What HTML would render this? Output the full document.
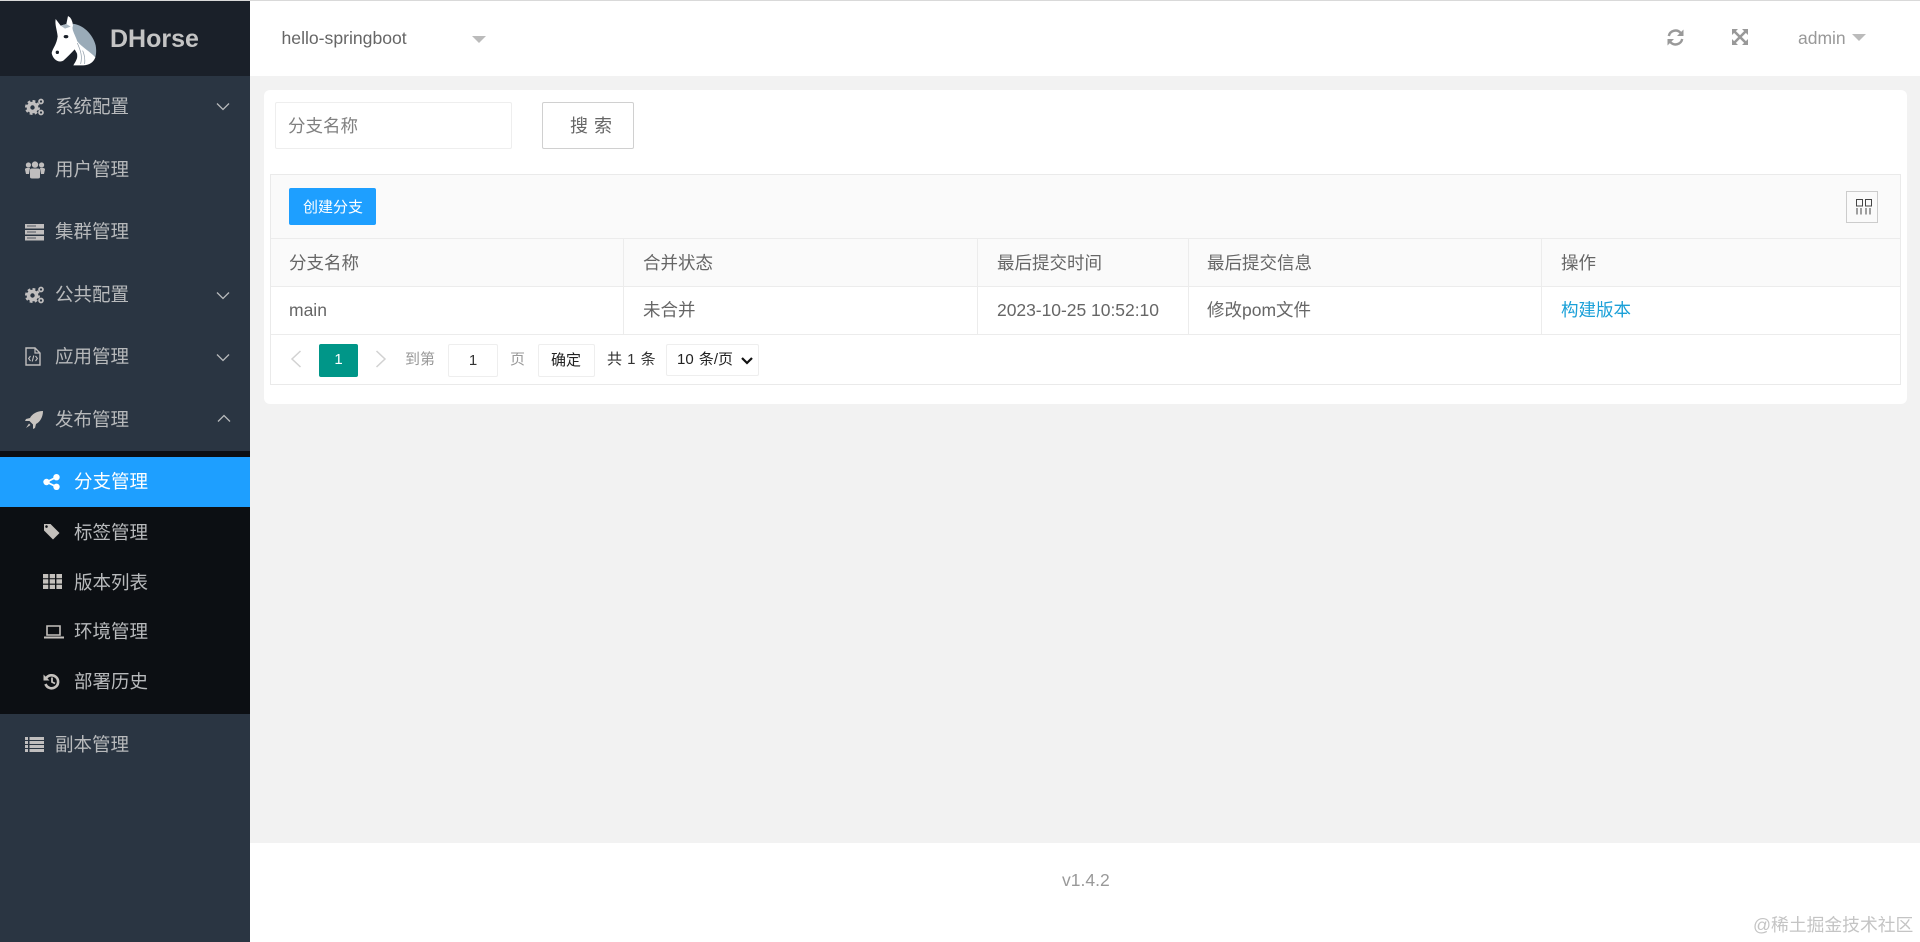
<!DOCTYPE html>
<html lang="zh"><head><meta charset="utf-8"><title>DHorse</title>
<style>
html,body{margin:0;padding:0;width:1920px;height:942px;overflow:hidden;background:#f2f2f2;font-family:"Liberation Sans","Noto Sans CJK SC",sans-serif;color:#666}
div,svg,a,span{position:absolute;box-sizing:border-box}
.t{white-space:nowrap;line-height:30px;height:30px}
.m{left:55px;font-size:18.5px;color:#b8babc}
.s{left:74px;font-size:18.5px;color:#b8babc}
.c{font-size:17.5px;color:#666}
.p{font-size:15px}
.b{background:#fff;border:1px solid #eee;border-radius:2px}
.ln{background:#ececec}
svg{overflow:visible}
</style></head><body>

<!-- sidebar -->
<div style="left:0;top:0;width:250px;height:942px;background:#2a3542"></div>
<div style="left:0;top:0;width:250px;height:76px;background:#1a2029"></div>
<div style="left:0;top:451px;width:250px;height:263px;background:#0c0f13"></div>
<div style="left:0;top:457px;width:250px;height:50px;background:#1e9fff"></div>

<svg style="left:40px;top:8px" width="70" height="62" viewBox="0 0 210 186">
<path d="M80 48C122 40 158 76 167 112C170 130 168 142 165 150L112 150L106 90Z" fill="#9aabb8"/>
<path d="M47 33L62 53L79 48L84 24Q97 30 99 54C93 62 106 82 112 100C126 118 152 132 166 148Q158 170 130 172L100 172C106 162 114 150 112 138L104 124C94 135 82 147 70 158C56 166 38 154 35 135C38 120 50 110 53 85C51 65 44 50 47 33Z" fill="#fff"/>
<path d="M62 53L79 48L92 56L75 62Z" fill="#aab7c1"/>
<ellipse cx="78" cy="86" rx="7" ry="5" fill="#1a2029"/>
<circle cx="52" cy="133" r="5" fill="#1a2029"/>
<path d="M112 105C120 125 128 140 122 168M128 128C134 142 136 152 134 168" fill="none" stroke="#8a98a4" stroke-width="2"/>
</svg>
<div class="t" style="left:110px;top:24px;font-size:25px;font-weight:bold;color:#c4c4c4">DHorse</div>

<!-- menu icons -->
<svg style="left:25px;top:97px" width="20" height="20" viewBox="0 0 20 20" fill="none" stroke="#c0bebe"><circle cx="7.5" cy="10.5" r="4" stroke-width="3.6"/><circle cx="7.5" cy="10.5" r="6.4" stroke-width="2.2" stroke-dasharray="2.8 2.2"/><circle cx="16" cy="4.5" r="2" stroke-width="1.7"/><circle cx="16" cy="15.5" r="2" stroke-width="1.7"/></svg>
<svg style="left:25px;top:160px" width="20" height="20" viewBox="0 0 20 20" fill="#c0bebe"><circle cx="3.4" cy="5" r="2.6"/><circle cx="16.6" cy="5" r="2.6"/><circle cx="10" cy="4.6" r="3.2"/><path d="M0 9.5Q0 8 2 8H5L4 14H1ZM20 9.5Q20 8 18 8H15L16 14H19Z"/><path d="M5 10Q5 8.5 7 8.5H13Q15 8.5 15 10V17Q15 18.5 13 18.5H7Q5 18.5 5 17Z"/></svg>
<svg style="left:25px;top:223px" width="19" height="18" viewBox="0 0 19 18" fill="#c0bebe"><path d="M0 1h19v4.5H0zM0 7h19v4.5H0zM0 13h19v4.5H0z"/><path d="M2 3h9M2 9h9M2 15h9" stroke="#2a3542" stroke-width=".8"/></svg>
<svg style="left:25px;top:285px" width="20" height="20" viewBox="0 0 20 20" fill="none" stroke="#c0bebe"><circle cx="7.5" cy="10.5" r="4" stroke-width="3.6"/><circle cx="7.5" cy="10.5" r="6.4" stroke-width="2.2" stroke-dasharray="2.8 2.2"/><circle cx="16" cy="4.5" r="2" stroke-width="1.7"/><circle cx="16" cy="15.5" r="2" stroke-width="1.7"/></svg>
<svg style="left:25px;top:347px" width="16" height="19" viewBox="0 0 16 19" fill="none" stroke="#c0bebe" stroke-width="1.4"><path d="M1 1H10L15 6V18H1Z"/><path d="M10 1V6H15" stroke-width="1.2"/><path d="M5.5 9L3.6 11.5L5.5 14M10.5 9L12.4 11.5L10.5 14M8.8 8.5L7.2 14.5" stroke-width="1.1"/></svg>
<svg style="left:25px;top:411px" width="18" height="18" viewBox="0 0 18 18" fill="#c8c4c0"><path d="M18 0C12 0 7 3 5 7L1 8L0 10L4.500 10L8 13.500L8 18L10 17L11 13C15 11 18 6 18 0Z"/><path d="M4 12.500L1 17L5.500 14Z"/></svg>

<svg style="left:43px;top:474px" width="17" height="16" viewBox="0 0 17 16" fill="#fff"><circle cx="3.500" cy="8" r="3.200"/><circle cx="13.500" cy="3.200" r="3.200"/><circle cx="13.500" cy="12.800" r="3.200"/><path d="M3.500 8L13.500 3.200M3.500 8L13.500 12.800" stroke="#fff" stroke-width="1.800"/></svg>
<svg style="left:43px;top:523px" width="17" height="17" viewBox="0 0 17 17" fill="#c4c0bc"><path d="M1 1H7.500L16.500 10L10 16.500L1 7.500ZM3.500 2.300A1.300 1.300 0 1 0 3.501 2.300Z"/></svg>
<svg style="left:43px;top:574px" width="19" height="15" viewBox="0 0 19 15" fill="#c4c0bc"><path d="M0 0h5.300v4.300H0zM6.700 0H12v4.300H6.700zM13.400 0H19v4.300h-5.600zM0 5.300h5.300v4.300H0zM6.700 5.300H12v4.300H6.700zM13.400 5.300H19v4.300h-5.600zM0 10.700h5.300V15H0zM6.700 10.700H12V15H6.700zM13.400 10.700H19V15h-5.600z"/></svg>
<svg style="left:44px;top:625px" width="20" height="14" viewBox="0 0 20 14"><path d="M3 1H16V10H3Z" fill="none" stroke="#c4c0bc" stroke-width="1.600"/><path d="M0 11.500H20V13.500H0Z" fill="#c4c0bc"/></svg>
<svg style="left:43px;top:673px" width="17" height="17" viewBox="0 0 17 17" fill="none" stroke="#c4c0bc"><path d="M3 5.500A6.500 6.500 0 1 1 2.500 11" stroke-width="2.600"/><path d="M0.500 1.500V7.500H6.500Z" fill="#c4c0bc" stroke="none"/><path d="M9 4.500V9L12 10.500" stroke-width="1.800"/></svg>
<svg style="left:25px;top:737px" width="19" height="15" viewBox="0 0 19 15" fill="#c0bebe"><path d="M0 0h3v3H0zM4.500 0H19v3H4.500zM0 4h3v3H0zM4.500 4H19v3H4.500zM0 8h3v3H0zM4.500 8H19v3H4.500zM0 12h3v3H0zM4.500 12H19v3H4.500z"/></svg>

<!-- menu text -->
<div class="t m" style="top:92px">系统配置</div>
<div class="t m" style="top:155px">用户管理</div>
<div class="t m" style="top:217px">集群管理</div>
<div class="t m" style="top:280px">公共配置</div>
<div class="t m" style="top:342px">应用管理</div>
<div class="t m" style="top:405px">发布管理</div>
<div class="t s" style="top:467px;color:#fff">分支管理</div>
<div class="t s" style="top:518px">标签管理</div>
<div class="t s" style="top:568px">版本列表</div>
<div class="t s" style="top:617px">环境管理</div>
<div class="t s" style="top:667px">部署历史</div>
<div class="t m" style="top:730px">副本管理</div>

<!-- chevrons -->
<svg style="left:216px;top:102px" width="14" height="9" fill="none" stroke="#b8babc" stroke-width="1.300"><path d="M1 1.500L7 7.500L13 1.500"/></svg>
<svg style="left:216px;top:291px" width="14" height="9" fill="none" stroke="#b8babc" stroke-width="1.300"><path d="M1 1.500L7 7.500L13 1.500"/></svg>
<svg style="left:216px;top:353px" width="14" height="9" fill="none" stroke="#b8babc" stroke-width="1.300"><path d="M1 1.500L7 7.500L13 1.500"/></svg>
<svg style="left:217px;top:414px" width="14" height="9" fill="none" stroke="#b8babc" stroke-width="1.300"><path d="M1 7.500L7 1.500L13 7.500"/></svg>

<!-- header -->
<div style="left:250px;top:0;width:1670px;height:76px;background:#fff"></div>
<div style="left:0;top:0;width:1920px;height:1px;background:#d9d9d9"></div>
<div class="t" style="left:281.500px;top:23px;font-size:17.600px;color:#666">hello-springboot</div>
<svg style="left:472px;top:36px" width="14" height="7"><path d="M0 0H14L7 7Z" fill="#bbb"/></svg>
<svg style="left:1667px;top:29px" width="17" height="17" viewBox="0 0 17 17" fill="none" stroke="#999" stroke-width="2.400"><path d="M1.800 7A6.800 6.800 0 0 1 13.500 3.800"/><path d="M15.200 10A6.800 6.800 0 0 1 3.500 13.200"/><path d="M16.500.5V7H10Z" fill="#999" stroke="none"/><path d="M.5 16.500V10H7Z" fill="#999" stroke="none"/></svg>
<svg style="left:1732px;top:29px" width="16" height="16" viewBox="0 0 16 16" fill="#999"><path d="M0 0H6L0 6ZM16 0V6L10 0ZM0 16V10L6 16ZM16 16H10L16 10Z"/><path d="M2 2L14 14M14 2L2 14" stroke="#999" stroke-width="2.600"/></svg>
<div class="t" style="left:1798px;top:23px;font-size:17.500px;color:#999">admin</div>
<svg style="left:1852px;top:34px" width="14" height="7"><path d="M0 0H14L7 7Z" fill="#bbb"/></svg>

<!-- card -->
<div style="left:264px;top:90px;width:1643px;height:314px;background:#fff;border-radius:6px"></div>
<div class="b" style="left:275px;top:102px;width:237px;height:47px"></div>
<div class="t" style="left:288px;top:111px;font-size:17.500px;color:#808080">分支名称</div>
<div style="left:542px;top:102px;width:92px;height:47px;background:#fff;border:1px solid #d0d0d0;border-radius:2px"></div>
<div class="t" style="left:570px;top:111px;font-size:18px;color:#666;word-spacing:1px">搜 索</div>

<!-- table -->
<div style="left:270px;top:174px;width:1631px;height:211px;background:#fff;border:1px solid #eaeaea"></div>
<div style="left:271px;top:175px;width:1629px;height:63px;background:#fafafa"></div>
<div style="left:271px;top:239px;width:1629px;height:47px;background:#fafafa"></div>
<div class="ln" style="left:271px;top:238px;width:1629px;height:1px"></div>
<div class="ln" style="left:271px;top:286px;width:1629px;height:1px"></div>
<div class="ln" style="left:271px;top:334px;width:1629px;height:1px"></div>
<div class="ln" style="left:623px;top:238px;width:1px;height:96px"></div>
<div class="ln" style="left:977px;top:238px;width:1px;height:96px"></div>
<div class="ln" style="left:1188px;top:238px;width:1px;height:96px"></div>
<div class="ln" style="left:1541px;top:238px;width:1px;height:96px"></div>

<div style="left:289px;top:188px;width:87px;height:37px;background:#1e9fff;border-radius:2px"></div>
<div class="t" style="left:303px;top:193px;font-size:15px;color:#fff">创建分支</div>

<div style="left:1846px;top:191px;width:32px;height:32px;border:1px solid #ccc"></div>
<svg style="left:1855px;top:198px" width="18" height="17" viewBox="0 0 18 17" fill="none" stroke="#444" stroke-width="1"><path d="M1.500 1.500H7.500V8H1.500ZM10.500 1.500H16.500V8H10.500ZM2 10V16.500M6 10V16.500M11 10V16.500M15 10V16.500"/></svg>

<div class="t c" style="left:289px;top:248px">分支名称</div>
<div class="t c" style="left:643px;top:248px">合并状态</div>
<div class="t c" style="left:997px;top:248px">最后提交时间</div>
<div class="t c" style="left:1207px;top:248px">最后提交信息</div>
<div class="t c" style="left:1561px;top:248px">操作</div>
<div class="t c" style="left:289px;top:295px">main</div>
<div class="t c" style="left:643px;top:295px">未合并</div>
<div class="t c" style="left:997px;top:295px;letter-spacing:-.03px">2023-10-25 10:52:10</div>
<div class="t c" style="left:1207px;top:295px">修改pom文件</div>
<div class="t c" style="left:1561px;top:295px;color:#1aa0d8">构建版本</div>

<!-- pagination -->
<svg style="left:290px;top:350px" width="12" height="18" fill="none" stroke="#d2d2d2" stroke-width="1.500"><path d="M10.500 1L2 9L10.500 17"/></svg>
<div style="left:319px;top:344px;width:39px;height:33px;background:#009688;border-radius:2px"></div>
<div class="t p" style="left:319px;top:345px;width:39px;text-align:center;color:#fff">1</div>
<svg style="left:375px;top:350px" width="12" height="18" fill="none" stroke="#d2d2d2" stroke-width="1.500"><path d="M1.500 1L10 9L1.500 17"/></svg>
<div class="t p" style="left:405px;top:345px;color:#999">到第</div>
<div class="b" style="left:448px;top:344px;width:50px;height:33px"></div>
<div class="t p" style="left:448px;top:346px;width:50px;text-align:center;color:#333">1</div>
<div class="t p" style="left:510px;top:345px;color:#999">页</div>
<div class="b" style="left:538px;top:344px;width:57px;height:33px"></div>
<div class="t p" style="left:551px;top:346px;color:#222">确定</div>
<div class="t p" style="left:607px;top:345px;color:#333;word-spacing:1px">共 1 条</div>
<div class="b" style="left:666px;top:344px;width:93px;height:32px"></div>
<div class="t p" style="left:677px;top:345px;color:#222;word-spacing:1px">10 条/页</div>
<svg style="left:741px;top:357px" width="12" height="8" fill="none" stroke="#111" stroke-width="2.200"><path d="M1 1L6 6L11 1"/></svg>

<!-- footer -->
<div style="left:250px;top:843px;width:1670px;height:99px;background:#fff"></div>
<div class="t" style="left:1062px;top:865px;font-size:17.500px;color:#999">v1.4.2</div>
<div class="t" style="left:1753px;top:910px;font-size:17.800px;color:#c4c4c4">@稀土掘金技术社区</div>
</body></html>
